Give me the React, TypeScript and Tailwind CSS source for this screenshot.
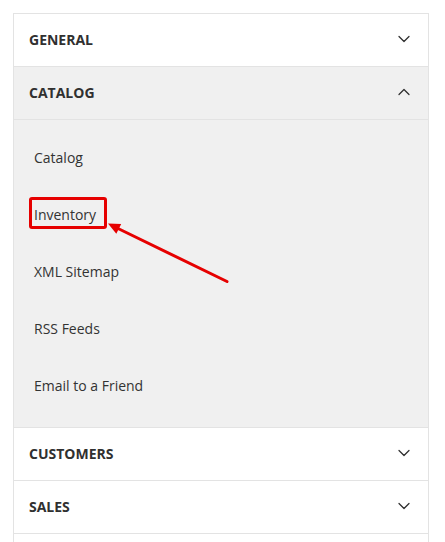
import { ChevronDown, ChevronUp } from "lucide-react";

const catalogItems = ["Catalog", "Inventory", "XML Sitemap", "RSS Feeds", "Email to a Friend"];

function SectionHeader({ title, open }: { title: string; open?: boolean }) {
  return (
    <div
      className={`flex h-[53px] items-center justify-between border-b border-[#e3e3e3] pb-[2px] pl-[15px] pr-[14px] ${
        open ? "bg-[#f0f0f0]" : "bg-white"
      }`}
    >
      <span className="text-[14px] font-bold uppercase text-[#303030]">{title}</span>
      {open ? (
        <ChevronUp size={20} strokeWidth={1.5} color="#303030" />
      ) : (
        <ChevronDown size={20} strokeWidth={1.5} color="#303030" />
      )}
    </div>
  );
}

export default function App() {
  return (
    <div className="relative h-[542px] w-[445px] overflow-hidden bg-white font-['Open_Sans',sans-serif]">
      <div className="pt-[13px] pl-[13px]">
        <div className="w-[416px] border-x border-t border-[#e3e3e3]">
          <SectionHeader title="General" />
          <SectionHeader title="Catalog" open />
          <div className="border-b border-[#e3e3e3] bg-[#f0f0f0] pt-[9px] pb-[13px]">
            {catalogItems.map((item) => (
              <div key={item} className="flex h-[57px] items-center pl-[20px] text-[14px] text-[#333333]">
                {item}
              </div>
            ))}
          </div>
          <SectionHeader title="Customers" />
          <SectionHeader title="Sales" />
          <div className="h-[53px] bg-white" />
        </div>
      </div>

      {/* annotation */}
      <svg
        className="pointer-events-none absolute left-0 top-0"
        width="445"
        height="542"
        viewBox="0 0 445 542"
      >
        <rect x="30.5" y="198.5" width="75" height="29" rx="1.5" fill="none" stroke="#e60000" strokeWidth="3" />
        <line x1="227" y1="281.5" x2="117" y2="228" stroke="#e60000" strokeWidth="3" strokeLinecap="round" />
        <polygon points="108,223.5 121.2,223.9 116.3,233.7" fill="#e60000" />
      </svg>
    </div>
  );
}
